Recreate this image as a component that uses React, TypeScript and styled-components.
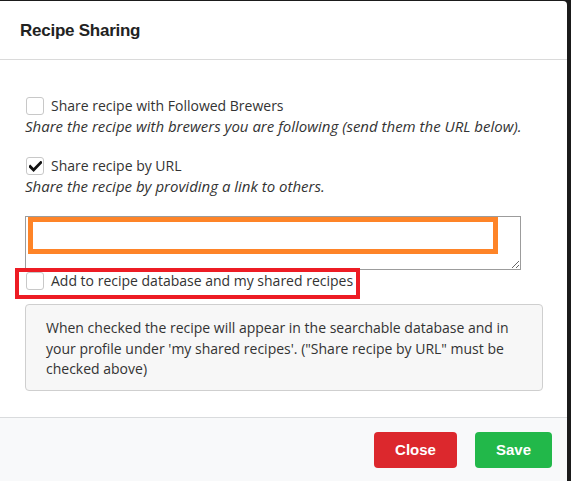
import styled, { createGlobalStyle } from 'styled-components'

const GlobalStyle = createGlobalStyle`
  html, body {
    margin: 0;
    padding: 0;
    background: #1b1b1b;
    overflow: hidden;
  }
`

const Check = () => (
  <svg width='13' height='11' viewBox='0 0 13 11'>
    <path d='M1.2 5.6 L4.6 9 L11.8 1.6' fill='none' stroke='#111' strokeWidth='2.8' strokeLinecap='square' />
  </svg>
)

interface OptionProps {
  label: string
  hint?: string
  checked?: boolean
}

function Option ({ label, hint, checked }: OptionProps) {
  return (
    <Group>
      <Row>
        <Box>{checked && <Check />}</Box>
        <Label>{label}</Label>
      </Row>
      {hint && <Hint>{hint}</Hint>}
    </Group>
  )
}

export default function App () {
  return (
    <>
      <GlobalStyle />
      <Modal>
        <Header>
          <Title>Recipe Sharing</Title>
        </Header>
        <Body>
          <Option
            label='Share recipe with Followed Brewers'
            hint='Share the recipe with brewers you are following (send them the URL below).'
          />
          <Option
            checked
            label='Share recipe by URL'
            hint='Share the recipe by providing a link to others.'
          />
          <UrlWrap>
            <UrlField readOnly defaultValue='' />
            <OrangeMark />
          </UrlWrap>
          <DbRow>
            <Row>
              <Box />
              <Label>Add to recipe database and my shared recipes</Label>
            </Row>
            <RedMark />
          </DbRow>
          <Info>
            When checked the recipe will appear in the searchable database and in
            your profile under 'my shared recipes'. ("Share recipe by URL" must be
            checked above)
          </Info>
        </Body>
        <Footer>
          <Button tone='#dc282d'>Close</Button>
          <Button tone='#22b84a'>Save</Button>
        </Footer>
      </Modal>
    </>
  )
}

const Modal = styled.div`
  margin-top: 1px;
  width: 567px;
  height: 480px;
  background: #fff;
  border-top-right-radius: 4px;
  display: flex;
  flex-direction: column;
  overflow: hidden;
`

const Header = styled.div`
  height: 58px;
  padding: 0 20px;
  display: flex;
  align-items: center;
  border-bottom: 1px solid #dadada;
`

const Title = styled.h4`
  margin: 0;
  font-family: 'Liberation Sans', Arial, sans-serif;
  font-size: 17px;
  font-weight: bold;
  color: #222;
  letter-spacing: -0.25px;
  position: relative;
  top: 1px;
`

const Body = styled.div`
  padding: 36px 25px 26px 25px;
  font-family: 'Open Sans', sans-serif;
  font-size: 14px;
  color: #333;
`

const Group = styled.div`
  margin-bottom: 20px;
`

const Row = styled.div`
  display: flex;
  align-items: center;
  height: 20px;
`

const Box = styled.span`
  box-sizing: border-box;
  width: 18px;
  height: 18px;
  margin-left: 1px;
  margin-right: 7px;
  border: 1px solid #c8c8c8;
  border-radius: 3px;
  background: #fff;
  display: flex;
  align-items: center;
  justify-content: center;
`

const Label = styled.span`
  line-height: 20px;
  color: #333;
`

const Hint = styled.div`
  font-style: italic;
  font-size: 15px;
  line-height: 20px;
  color: #333;
`

const UrlWrap = styled.div`
  position: relative;
  height: 54px;
  width: 496px;
`

const UrlField = styled.textarea`
  box-sizing: border-box;
  display: block;
  width: 496px;
  height: 54px;
  margin: 0;
  border: 1px solid #9c9c9c;
  border-radius: 0;
  outline: none;
  font-family: 'Open Sans', sans-serif;
  font-size: 14px;
  resize: both;
`

const OrangeMark = styled.div`
  position: absolute;
  left: 3px;
  top: 1px;
  width: 470px;
  height: 37px;
  box-sizing: border-box;
  border: 5px solid #fe8428;
`

const DbRow = styled.div`
  position: relative;
  padding: 1px 0;
`

const RedMark = styled.div`
  position: absolute;
  left: -10px;
  top: -2px;
  width: 345px;
  height: 31px;
  box-sizing: border-box;
  border: 4px solid #ed1c24;
`

const Info = styled.div`
  margin-top: 12px;
  padding: 13px 20px 10px 20px;
  background: #f7f7f7;
  border: 1px solid #cfcfcf;
  border-radius: 4px;
  line-height: 20.5px;
  color: #333;
  width: 476px;
`

const Footer = styled.div`
  flex: 1;
  background: #f8f9fa;
  border-top: 1px solid #d9dbdd;
  display: flex;
  justify-content: flex-end;
  align-items: flex-start;
  gap: 18px;
  padding: 14px 15px 0 0;
`

const Button = styled.button<{ tone: string }>`
  height: 36px;
  padding: 0 21px;
  border: none;
  border-radius: 4px;
  background: ${(p) => p.tone};
  color: #fff;
  font-family: 'Liberation Sans', Arial, sans-serif;
  font-size: 15px;
  font-weight: bold;
`
